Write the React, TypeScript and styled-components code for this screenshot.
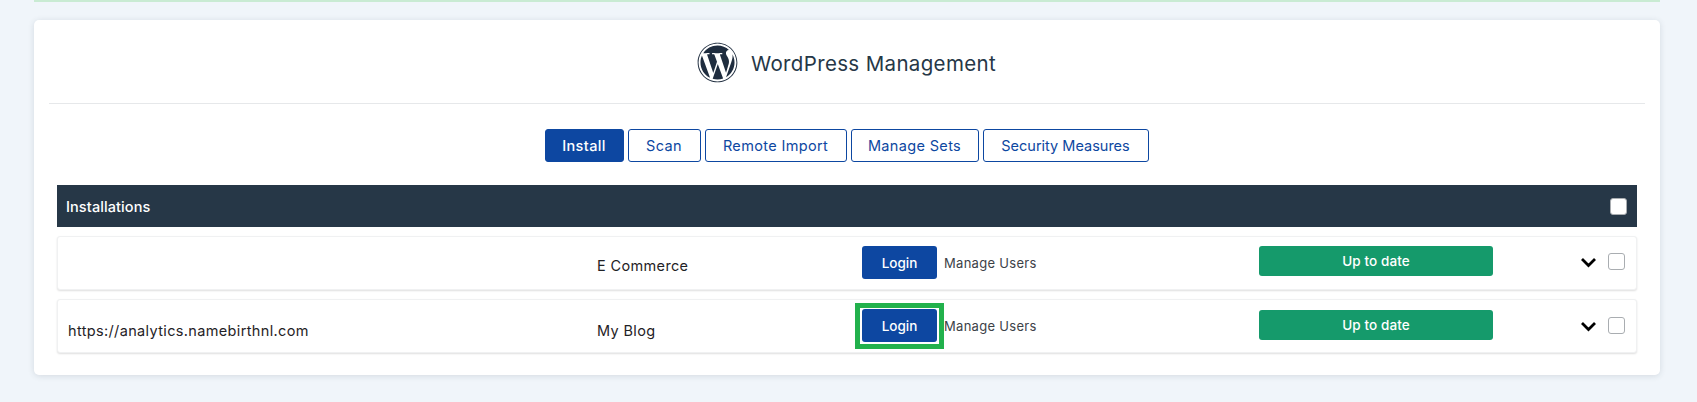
import React from "react";
import styled, { createGlobalStyle } from "styled-components";
import { FaWordpress } from "react-icons/fa";

const Global = createGlobalStyle`
  html, body { margin: 0; padding: 0; background: #f0f5fa; }
  body { font-family: Inter, "Open Sans", sans-serif; height: 402px; overflow: hidden; }
  * { box-sizing: border-box; }
`;

const Page = styled.div`
  padding: 0 37px 0 34px;
`;
const Notice = styled.div`
  height: 2px;
  background: #c9ebd3;
`;
const Card = styled.section`
  margin-top: 18px;
  height: 355px;
  background: #fff;
  border-radius: 5px;
  box-shadow: 0 1px 6px rgba(40, 55, 71, 0.14);
  padding: 0 15px 0 15px;
`;
const Heading = styled.header`
  height: 84px;
  border-bottom: 1px solid #e6e8ea;
  display: flex;
  align-items: center;
  justify-content: center;
  gap: 13px;
  padding-top: 1px;
  padding-right: 1px;
  color: #1f2d3f;
`;
const Title = styled.h2`
  margin: 3px 0 0;
  font-size: 20.5px;
  letter-spacing: 0.35px;
  font-weight: 400;
  color: #263747;
`;
const Tabs = styled.nav`
  margin-top: 25px;
  display: flex;
  justify-content: center;
  gap: 4px;
  padding-right: 1px;
`;
const Tab = styled.button<{ $active?: boolean; $w: number; $track?: number }>`
  width: ${(p) => p.$w}px;
  height: 33px;
  border: 1px solid #0d47a1;
  border-radius: 3px;
  background: ${(p) => (p.$active ? "#0d47a1" : "#fff")};
  color: ${(p) => (p.$active ? "#fff" : "#0d47a1")};
  font: ${(p) => (p.$active ? 500 : 400)} 14.5px Inter, sans-serif;
  letter-spacing: ${(p) => p.$track ?? 0.35}px;
  padding: 0;
`;
const Table = styled.div`
  margin: 23px 8px 0;
`;
const TableHead = styled.div`
  height: 42px;
  background: #263747;
  color: #fff;
  display: flex;
  align-items: center;
  justify-content: space-between;
  padding: 0 10px 0 9px;
  font-size: 14.5px;
  letter-spacing: 0.1px;
  font-weight: 500;
`;
const Box = styled.span`
  display: block;
  width: 17px;
  height: 17px;
  border: 1px solid #a9adb1;
  border-radius: 3px;
  background: #fff;
`;
const Row = styled.div`
  margin-top: 9px;
  height: 54px;
  background: #fff;
  border: 1px solid #f0f1f2;
  border-radius: 3px;
  box-shadow: 0 1px 2px rgba(0, 0, 0, 0.13);
  display: grid;
  grid-template-columns: 529px 265px 397px 234px 1fr;
  padding-left: 10px;
`;
const Cell = styled.div<{ $top: number }>`
  padding-top: ${(p) => p.$top}px;
  font-size: 14.5px;
  letter-spacing: 0.35px;
  color: #1f2226;
  line-height: 20px;
`;
const Access = styled.div`
  padding-top: 9px;
  display: flex;
  align-items: flex-start;
  gap: 7px;
`;
const LoginWrap = styled.div<{ $focus?: boolean }>`
  position: relative;
  &::after {
    content: "";
    display: ${(p) => (p.$focus ? "block" : "none")};
    position: absolute;
    inset: -6px -7px -7px -7px;
    border: 5px solid #22b14c;
    pointer-events: none;
  }
`;
const Login = styled.button`
  display: block;
  width: 75px;
  height: 33px;
  padding: 0;
  border: 0;
  border-radius: 3px;
  background: #0d47a1;
  color: #fff;
  font: 500 13.5px Inter, sans-serif;
`;
const Users = styled.span`
  font-size: 13px;
  letter-spacing: 0.3px;
  color: #3c4248;
  line-height: 16px;
  margin-top: 9px;
`;
const Status = styled.div<{ $top: number }>`
  margin-top: ${(p) => p.$top}px;
  height: 30px;
  background: #159a6b;
  color: #fff;
  border-radius: 3px;
  font-size: 13.5px;
  letter-spacing: 0.1px;
  font-weight: 500;
  display: flex;
  align-items: center;
  justify-content: center;
`;
const Tools = styled.div<{ $top: number }>`
  display: flex;
  align-items: flex-start;
  padding: ${(p) => p.$top}px 11px 0 0;
  justify-content: flex-end;
  gap: 11px;
`;
const Chevron = styled.svg`
  width: 17px;
  height: 11px;
  margin-top: 4px;
`;

const rows = [
  { url: "", name: "E Commerce", focus: false, top: 19, status: 9, tools: 16 },
  { url: "https://analytics.namebirthnl.com", name: "My Blog", focus: true, top: 21, status: 10, tools: 17 },
];

export default function App() {
  return (
    <Page>
      <Global />
      <Notice />
      <Card>
        <Heading>
          <FaWordpress size={41} />
          <Title>WordPress Management</Title>
        </Heading>
        <Tabs>
          <Tab $active $w={79}>Install</Tab>
          <Tab $w={73}>Scan</Tab>
          <Tab $w={142}>Remote Import</Tab>
          <Tab $w={128}>Manage Sets</Tab>
          <Tab $w={166} $track={0}>Security Measures</Tab>
        </Tabs>
        <Table>
          <TableHead>
            Installations
            <Box />
          </TableHead>
          {rows.map((r) => (
            <Row key={r.name}>
              <Cell $top={r.top}>{r.url}</Cell>
              <Cell $top={r.top}>{r.name}</Cell>
              <Access>
                <LoginWrap $focus={r.focus}>
                  <Login>Login</Login>
                </LoginWrap>
                <Users>Manage Users</Users>
              </Access>
              <Status $top={r.status}>Up to date</Status>
              <Tools $top={r.tools}>
                <Chevron viewBox="0 0 17 11">
                  <path d="M2 2 L8.5 8.5 L15 2" fill="none" stroke="#000" strokeWidth="2.8" />
                </Chevron>
                <Box />
              </Tools>
            </Row>
          ))}
        </Table>
      </Card>
    </Page>
  );
}
